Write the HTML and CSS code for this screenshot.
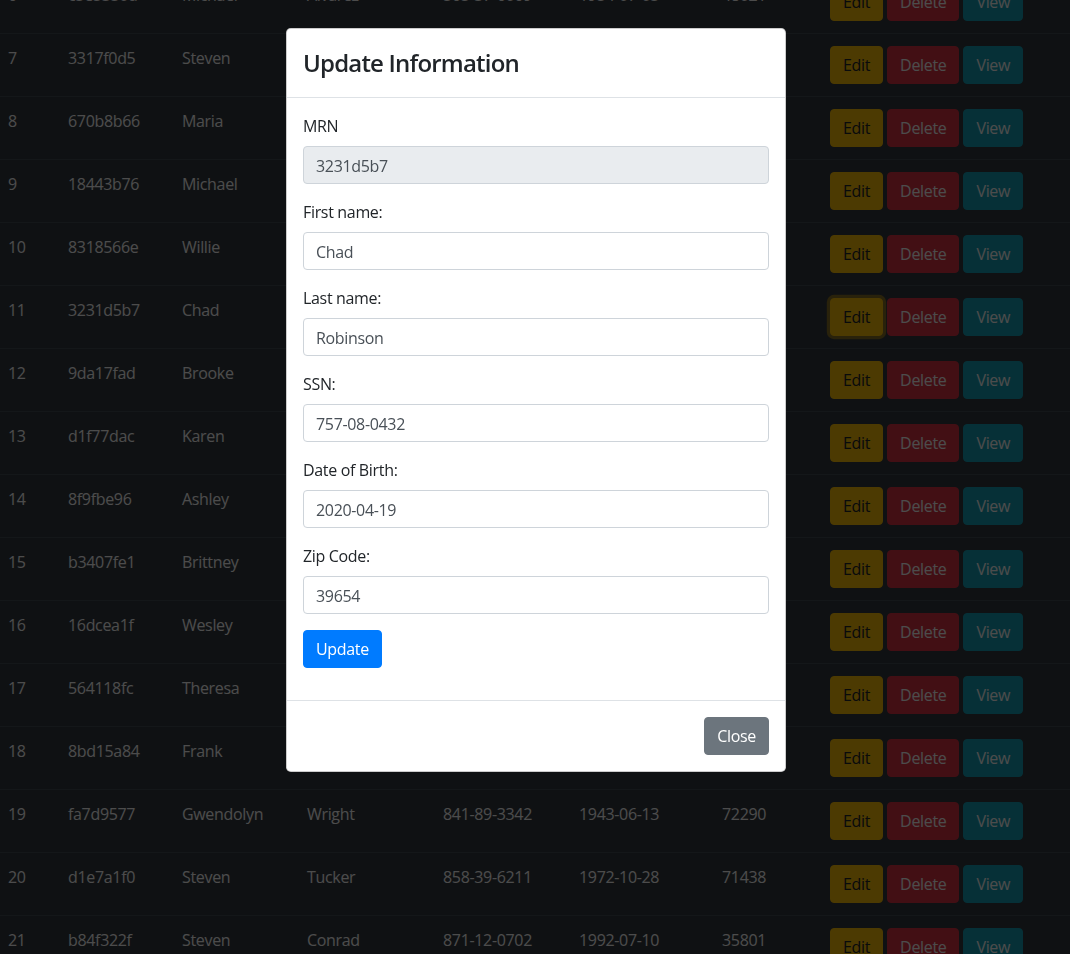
FILE: index.html
```html
<!DOCTYPE html>
<html lang="en">
<head>
<meta charset="utf-8">
<title>Patients</title>
<link rel="stylesheet" href="styles.css">
</head>
<body>
<div class="page">
  <table class="data">
    <colgroup>
      <col class="c1"><col class="c2"><col class="c3"><col class="c4"><col class="c5"><col class="c6"><col class="c7"><col>
    </colgroup>
    <tbody>
      <tr><td>6</td><td>c5e5350d</td><td>Michael</td><td>Alvarez</td><td>565-37-6069</td><td>1954-07-05</td><td>48021</td><td><div class="actions"><button class="btn warn">Edit</button><button class="btn danger">Delete</button><button class="btn info">View</button></div></td></tr>
      <tr><td>7</td><td>3317f0d5</td><td>Steven</td><td>Harris</td><td>612-44-1875</td><td>1968-02-14</td><td>30412</td><td><div class="actions"><button class="btn warn">Edit</button><button class="btn danger">Delete</button><button class="btn info">View</button></div></td></tr>
      <tr><td>8</td><td>670b8b66</td><td>Maria</td><td>Lopez</td><td>523-18-9046</td><td>1985-11-02</td><td>60615</td><td><div class="actions"><button class="btn warn">Edit</button><button class="btn danger">Delete</button><button class="btn info">View</button></div></td></tr>
      <tr><td>9</td><td>18443b76</td><td>Michael</td><td>Bennett</td><td>701-52-3318</td><td>1959-06-21</td><td>85004</td><td><div class="actions"><button class="btn warn">Edit</button><button class="btn danger">Delete</button><button class="btn info">View</button></div></td></tr>
      <tr><td>10</td><td>8318566e</td><td>Willie</td><td>Parker</td><td>488-27-6650</td><td>1977-09-30</td><td>27601</td><td><div class="actions"><button class="btn warn">Edit</button><button class="btn danger">Delete</button><button class="btn info">View</button></div></td></tr>
      <tr><td>11</td><td>3231d5b7</td><td>Chad</td><td>Robinson</td><td>757-08-0432</td><td>2020-04-19</td><td>39654</td><td><div class="actions"><button class="btn warn focus">Edit</button><button class="btn danger">Delete</button><button class="btn info">View</button></div></td></tr>
      <tr><td>12</td><td>9da17fad</td><td>Brooke</td><td>Sanders</td><td>634-71-2209</td><td>1991-03-08</td><td>98101</td><td><div class="actions"><button class="btn warn">Edit</button><button class="btn danger">Delete</button><button class="btn info">View</button></div></td></tr>
      <tr><td>13</td><td>d1f77dac</td><td>Karen</td><td>Mitchell</td><td>559-36-7741</td><td>1962-12-17</td><td>44113</td><td><div class="actions"><button class="btn warn">Edit</button><button class="btn danger">Delete</button><button class="btn info">View</button></div></td></tr>
      <tr><td>14</td><td>8f9fbe96</td><td>Ashley</td><td>Turner</td><td>812-65-4097</td><td>1996-05-26</td><td>73301</td><td><div class="actions"><button class="btn warn">Edit</button><button class="btn danger">Delete</button><button class="btn info">View</button></div></td></tr>
      <tr><td>15</td><td>b3407fe1</td><td>Brittney</td><td>Collins</td><td>406-93-1152</td><td>1988-08-11</td><td>55401</td><td><div class="actions"><button class="btn warn">Edit</button><button class="btn danger">Delete</button><button class="btn info">View</button></div></td></tr>
      <tr><td>16</td><td>16dcea1f</td><td>Wesley</td><td>Morgan</td><td>729-40-5583</td><td>1973-01-29</td><td>64106</td><td><div class="actions"><button class="btn warn">Edit</button><button class="btn danger">Delete</button><button class="btn info">View</button></div></td></tr>
      <tr><td>17</td><td>564118fc</td><td>Theresa</td><td>Reed</td><td>538-12-8864</td><td>1955-10-04</td><td>19103</td><td><div class="actions"><button class="btn warn">Edit</button><button class="btn danger">Delete</button><button class="btn info">View</button></div></td></tr>
      <tr><td>18</td><td>8bd15a84</td><td>Frank</td><td>Hughes</td><td>667-28-3390</td><td>1949-04-15</td><td>80202</td><td><div class="actions"><button class="btn warn">Edit</button><button class="btn danger">Delete</button><button class="btn info">View</button></div></td></tr>
      <tr><td>19</td><td>fa7d9577</td><td>Gwendolyn</td><td>Wright</td><td>841-89-3342</td><td>1943-06-13</td><td>72290</td><td><div class="actions"><button class="btn warn">Edit</button><button class="btn danger">Delete</button><button class="btn info">View</button></div></td></tr>
      <tr><td>20</td><td>d1e7a1f0</td><td>Steven</td><td>Tucker</td><td>858-39-6211</td><td>1972-10-28</td><td>71438</td><td><div class="actions"><button class="btn warn">Edit</button><button class="btn danger">Delete</button><button class="btn info">View</button></div></td></tr>
      <tr><td>21</td><td>b84f322f</td><td>Steven</td><td>Conrad</td><td>871-12-0702</td><td>1992-07-10</td><td>35801</td><td><div class="actions"><button class="btn warn">Edit</button><button class="btn danger">Delete</button><button class="btn info">View</button></div></td></tr>
    </tbody>
  </table>
</div>

<div class="backdrop"></div>

<div class="modal">
  <div class="dialog">
    <div class="content">
      <div class="header">
        <h4 class="title">Update Information</h4>
      </div>
      <div class="body">
        <form class="form">
          <div class="group">
            <label class="label">MRN</label>
            <input class="input" type="text" value="3231d5b7" readonly>
          </div>
          <div class="group">
            <label class="label">First name:</label>
            <input class="input" type="text" value="Chad">
          </div>
          <div class="group">
            <label class="label">Last name:</label>
            <input class="input" type="text" value="Robinson">
          </div>
          <div class="group">
            <label class="label">SSN:</label>
            <input class="input" type="text" value="757-08-0432">
          </div>
          <div class="group">
            <label class="label">Date of Birth:</label>
            <input class="input" type="text" value="2020-04-19">
          </div>
          <div class="group">
            <label class="label">Zip Code:</label>
            <input class="input" type="text" value="39654">
          </div>
          <div class="group">
            <button type="button" class="btn primary">Update</button>
          </div>
        </form>
      </div>
      <div class="footer">
        <button type="button" class="btn secondary">Close</button>
      </div>
    </div>
  </div>
</div>
</body>
</html>
```

FILE: styles.css
```css
* {
  box-sizing: border-box;
}

html, body {
  margin: 0;
  padding: 0;
  height: 100%;
  overflow: hidden;
}

body {
  font-family: "Open Sans", "Noto Sans", sans-serif;
  font-size: 16px;
  line-height: 24px;
  letter-spacing: -0.33px;
  color: #212529;
  background: #343a40;
}

.page {
  height: 100%;
  overflow: hidden;
}

.data {
  width: 100%;
  border-collapse: collapse;
  table-layout: fixed;
  margin-top: -30px;
  background: #343a40;
  color: #fff;
}

.c1 { width: 56px; }
.c2 { width: 114px; }
.c3 { width: 125px; }
.c4 { width: 136px; }
.c5 { width: 136px; }
.c6 { width: 143px; }
.c7 { width: 108px; }

.data td {
  padding: 12px;
  border-top: 1px solid #454d55;
  vertical-align: top;
  white-space: nowrap;
}

.data td:first-child {
  padding-left: 8px;
}

.actions {
  display: flex;
  gap: 4px;
}

.btn {
  display: inline-block;
  font-family: inherit;
  font-size: 16px;
  line-height: 24px;
  letter-spacing: -0.33px;
  padding: 6px 12px;
  border: 1px solid transparent;
  border-radius: 4px;
  cursor: pointer;
}

.warn {
  background: #ffc107;
  border-color: #ffc107;
  color: #212529;
}

.warn.focus {
  box-shadow: 0 0 0 3.2px rgba(222, 170, 12, 0.5);
}

.danger {
  background: #dc3545;
  border-color: #dc3545;
  color: #fff;
}

.info {
  background: #17a2b8;
  border-color: #17a2b8;
  color: #fff;
}

.primary {
  background: #007bff;
  border-color: #007bff;
  color: #fff;
}

.secondary {
  background: #6c757d;
  border-color: #6c757d;
  color: #fff;
}

.backdrop {
  position: fixed;
  inset: 0;
  background: #000;
  opacity: 0.7;
}

.modal {
  position: fixed;
  inset: 0;
  padding-left: 2px;
}

.dialog {
  width: 500px;
  margin: 28px auto 0;
}

.content {
  background: #fff;
  border: 1px solid rgba(0, 0, 0, 0.2);
  border-radius: 4.8px;
  display: flex;
  flex-direction: column;
}

.header {
  padding: 16px;
  border-bottom: 1px solid #dee2e6;
}

.title {
  margin: 0;
  font-size: 24px;
  line-height: 36px;
  font-weight: 600;
  letter-spacing: -0.8px;
  color: #212529;
}

.body {
  padding: 16px;
}

.form {
  margin: 0;
}

.group {
  margin-bottom: 16px;
}

.label {
  display: inline-block;
  margin-bottom: 8px;
}

.input {
  display: block;
  width: 100%;
  height: 38px;
  padding: 7px 12px 5px;
  font-family: inherit;
  font-size: 16px;
  line-height: 24px;
  letter-spacing: -0.33px;
  color: #495057;
  background: #fff;
  border: 1px solid #ced4da;
  border-radius: 4px;
  outline: none;
}

.input[readonly] {
  background: #e9ecef;
}

.footer {
  display: flex;
  justify-content: flex-end;
  padding: 12px;
  border-top: 1px solid #dee2e6;
}

.footer .btn {
  margin: 4px;
}
```
